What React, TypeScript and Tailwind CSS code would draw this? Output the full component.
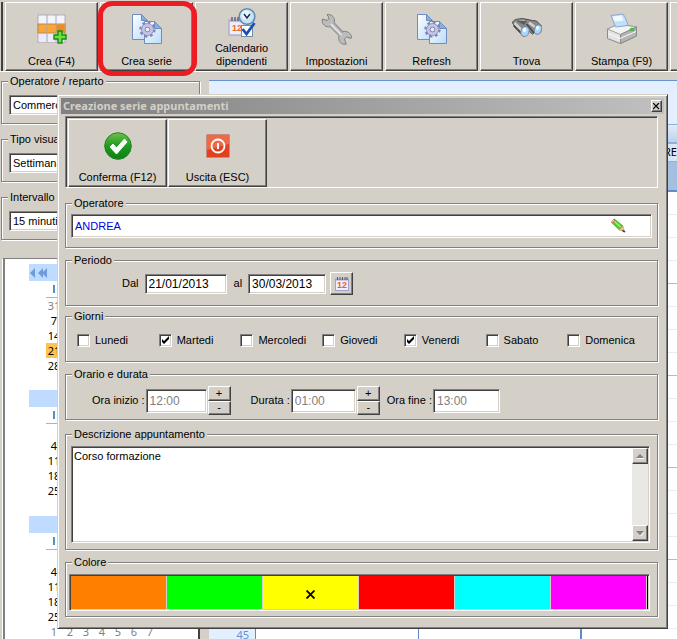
import { useState } from 'react'
import type { ReactNode } from 'react'
import clsx from 'clsx'

const raised =
  'border border-t-white border-l-white border-r-[#404040] border-b-[#404040] shadow-[inset_-1px_-1px_0_#808080] bg-[#d4d0c8]'
const sunken =
  'border border-t-[#808080] border-l-[#808080] border-r-white border-b-white shadow-[inset_1px_1px_0_#404040,inset_-1px_-1px_0_#d4d0c8] bg-white'

function GridAddIcon() {
  return (
    <svg width="32" height="32" viewBox="0 0 32 32">
      <rect x="2" y="2" width="27" height="27" fill="#fff" stroke="#a9a6b8" />
      <rect x="3" y="3" width="25" height="8" fill="#f3f3fc" />
      <rect x="3" y="20" width="25" height="9" fill="#ececf8" />
      <rect x="2" y="11" width="27" height="9" fill="#f9a73a" stroke="#c08a48" />
      <rect x="20" y="12" width="8" height="7" fill="#ee8d1b" />
      <path d="M11 2v27M20 2v27" stroke="#a9a6b8" />
      <path d="M22 18h4v4h4v4h-4v4h-4v-4h-4v-4h4z" fill="#6fe03c" stroke="#168c1a" strokeWidth="1.4" />
    </svg>
  )
}

function DocsGearIcon() {
  return (
    <svg width="32" height="32" viewBox="0 0 32 32">
      <defs>
        <linearGradient id="doc" x1="0" y1="0" x2="1" y2="1">
          <stop offset="0" stopColor="#fff" />
          <stop offset="1" stopColor="#b9dcfb" />
        </linearGradient>
      </defs>
      <path d="M1.500 1.500h9l6 6v19h-15z" fill="url(#doc)" stroke="#6f8bc0" />
      <path d="M10.500 1.500v6h6z" fill="#7db5ea" stroke="#6f8bc0" />
      <path d="M13.500 8.500h10l7 7v15h-17z" fill="url(#doc)" stroke="#6f8bc0" />
      <path d="M23.500 8.500v7h7z" fill="#7db5ea" stroke="#6f8bc0" />
      <circle cx="16.500" cy="16.500" r="7" fill="none" stroke="#8183b4" strokeWidth="2.400" strokeDasharray="2.750 2.750" />
      <circle cx="16.500" cy="16.500" r="6" fill="#c5c6e2" stroke="#8e90c0" />
      <circle cx="16.500" cy="16.500" r="2.400" fill="#e4eefb" stroke="#7f81b4" />
    </svg>
  )
}

function CalendarCheckIcon() {
  return (
    <svg width="32" height="32" viewBox="0 0 32 32">
      <rect x="3" y="13" width="19" height="15" fill="#eeedfb" stroke="#9a98c8" />
      <path d="M3 12h18v3H3z" fill="#b8b6dc" />
      <path d="M6 10v4M9 10v4M12 10v4M15 10v4" stroke="#55536e" strokeWidth="1.300" />
      <text x="6" y="24" fontSize="9" fontWeight="700" fill="#f06a1c" fontFamily="Liberation Sans, sans-serif">12</text>
      <circle cx="21" cy="9.500" r="7.800" fill="#c4e4fa" stroke="#6788ad" strokeWidth="1.600" />
      <circle cx="20" cy="8" r="4.500" fill="#e8f6ff" />
      <path d="M18 7l3 4 3-4" fill="none" stroke="#1b2a44" strokeWidth="1.400" />
      <rect x="15.500" y="18.500" width="11" height="11" fill="#fff" stroke="#7a8aa0" />
      <path d="M16.500 22l4 5 8-11" fill="none" stroke="#1450b8" strokeWidth="2.800" />
    </svg>
  )
}

function WrenchIcon() {
  return (
    <svg width="32" height="32" viewBox="0 0 32 32">
      <path
        d="M6 1.500c4-.5 7 2 7.500 5.500l-.3 2.700 8.500 8.800c4-.8 8.300 1.500 8.800 5.500l-.5 1.500-4.500-1.500-2 1.800.8 3.200 1.200 2c-4 1-7.300-1-7.800-5.500l.2-3-8.700-8.800C5 14.500 1.500 12 1.200 8l.3-2 4.500 1.500 2-1.700-.8-2.500z"
        fill="#bcbcbc"
        stroke="#808080"
      />
      <path d="M10 11l10.500 11" stroke="#e6e6e6" strokeWidth="1.500" />
      <path d="M12.500 10L22 20" stroke="#999" />
    </svg>
  )
}

function BinocularsIcon() {
  return (
    <svg width="32" height="32" viewBox="0 0 32 32">
      <path d="M1.500 10c0-2 3-4 6-4l4-.500 10 2 4 .500 5 5-9 8-6-5-3 5-8-7z" fill="#8a8a8a" stroke="#4a4a4a" />
      <path d="M9 6.500l7 1.500-3 4-7-4z" fill="#5c5c5c" />
      <path d="M3.500 10l9 9M18 9.500l8 6" stroke="#d2d2d2" strokeWidth="2.600" />
      <path d="M2.500 12.500l8 8.500M15.500 11l7.500 9" stroke="#444" strokeWidth="1.400" />
      <path d="M8 7l6 .5" stroke="#b9b9b9" />
      <ellipse cx="14" cy="18.500" rx="4" ry="5" fill="#a9d5fb" stroke="#77879a" transform="rotate(20 14 18.500)" />
      <ellipse cx="27" cy="16.500" rx="3.600" ry="4.800" fill="#a9d5fb" stroke="#77879a" transform="rotate(20 27 16.500)" />
      <ellipse cx="13.500" cy="17" rx="1.800" ry="2.200" fill="#eff9ff" />
      <ellipse cx="26.500" cy="15" rx="1.600" ry="2" fill="#eff9ff" />
    </svg>
  )
}

function PrinterIcon() {
  return (
    <svg width="32" height="32" viewBox="0 0 32 32">
      <path d="M1.500 16l11-5 18 3v9l-16 7.500-13-5z" fill="#e4e4e4" stroke="#8a8a8a" />
      <path d="M1.500 16l11-5 18 3-16 7.500z" fill="#f3f3f3" stroke="#a0a0a0" />
      <path d="M14.500 21.500v9l16-7.500v-9z" fill="#b5b5b5" stroke="#8a8a8a" />
      <path d="M2 20.500l12 5 16-7" fill="none" stroke="#fafafa" />
      <path d="M9.500 14L5 2.500 17 1c3 4 3.500 7 5 11.500z" fill="#c0e0fb" stroke="#8aa8cc" />
      <path d="M6.500 3.500l9-1 2 5-9 1z" fill="#f3faff" />
      <ellipse cx="26" cy="16.500" rx="2" ry="1.500" fill="#3ccf3c" stroke="#3a963a" strokeWidth=".5" />
    </svg>
  )
}

function ConfirmIcon() {
  return (
    <svg width="28" height="28" viewBox="0 0 28 28">
      <defs>
        <linearGradient id="ok" x1="0" y1="0" x2="0" y2="1">
          <stop offset="0" stopColor="#6cc04a" />
          <stop offset=".5" stopColor="#1f9a1f" />
          <stop offset="1" stopColor="#0d8011" />
        </linearGradient>
      </defs>
      <circle cx="14" cy="14" r="13.300" fill="url(#ok)" stroke="#22862a" />
      <path d="M6 15l3-3 3.500 4 8-9 2.500 3-10.500 12z" fill="#fff" stroke="#fff" strokeLinejoin="round" />
    </svg>
  )
}

function PowerIcon() {
  return (
    <svg width="24" height="24" viewBox="0 0 24 24">
      <rect x=".5" y=".5" width="23" height="23" rx="1" fill="#e2401f" stroke="#c98b7c" />
      <path d="M1 1h22v9L1 16z" fill="#ec6a4a" />
      <circle cx="12" cy="12" r="6.500" fill="none" stroke="#fff" strokeWidth="1.800" />
      <path d="M12 9v6" stroke="#fff" strokeWidth="2" />
    </svg>
  )
}

function PencilIcon() {
  return (
    <svg width="16" height="16" viewBox="0 0 16 16">
      <path d="M4.500 1L1.500 4.500l8 7.500 3.500-4z" fill="#4fce25" stroke="#3a9a1c" strokeWidth=".6" />
      <path d="M4.500 3.500l6 5.500" stroke="#a4f07a" strokeWidth="1.400" />
      <path d="M4 1L1.500 4l1 1L5 2z" fill="#fff" stroke="#e05050" strokeWidth=".8" />
      <path d="M9 12l4-4 1.500 5.500z" fill="#f5bd86" stroke="#c08a58" strokeWidth=".5" />
      <path d="M12.500 12.500l2 .5.500 1-2-.5z" fill="#333" stroke="#444" />
    </svg>
  )
}

function SmallCalendarIcon() {
  return (
    <svg width="16" height="16" viewBox="0 0 16 16">
      <rect x="1.500" y="3.500" width="13" height="11" fill="#f0effc" stroke="#a2a0cc" />
      <path d="M1 2.500h14v2H1z" fill="#a5a3c4" />
      <path d="M3.500 1v3M6 1v3M8.500 1v3M11 1v3M13 1v3" stroke="#5a5870" />
      <text x="3" y="12" fontSize="9" fontWeight="700" fill="#f0601a" fontFamily="Liberation Sans, sans-serif">12</text>
    </svg>
  )
}

interface ToolButtonProps {
  icon: ReactNode
  label: string
  active?: boolean
  className?: string
}

function ToolButton({ icon, label, active, className }: ToolButtonProps) {
  return (
    <button
      type="button"
      className={clsx('relative flex shrink-0 flex-col items-center px-2 pb-[2px] leading-[13px]', raised, className, active && 'border-t-black')}
    >
      <span className="flex flex-1 items-center">{icon}</span>
      <span className="text-center">{label}</span>
      {active && <span className="absolute -top-[2px] -right-[5px] -bottom-[6px] -left-[3px] z-10 rounded-[14px] border-[5px] border-[#ed1c24]" />}
    </button>
  )
}

function Group({ title, className, children }: { title: string; className?: string; children: ReactNode }) {
  return (
    <fieldset className={clsx('min-w-0 border border-[#808080] shadow-[inset_1px_1px_0_#fff,1px_1px_0_#fff]', className)}>
      <legend className="ml-[6px] bg-[#d4d0c8] px-[2px] leading-3 whitespace-nowrap">{title}</legend>
      {children}
    </fieldset>
  )
}

function SideSelect({ title, value }: { title: string; value: string }) {
  return (
    <Group title={title} className="pt-2 pb-2">
      <div className="px-[7px]">
        <select aria-label={title} className={clsx('block h-5 w-full appearance-none px-[3px]', sunken)}>
          <option>{value}</option>
        </select>
      </div>
    </Group>
  )
}

const months = [
  [['31'], ['7'], ['14'], ['21'], ['28'], ['']],
  [[''], ['4'], ['11'], ['18'], ['25'], ['']],
  [[''], ['4'], ['11'], ['18'], ['25'], ['1', '2', '3', '4', '5', '6', '7']],
]

function Month({ weeks, first }: { weeks: string[][]; first: boolean }) {
  return (
    <div className="w-[150px] text-[11px]">
      <div className="flex h-[17px] items-center bg-[#bfdbff] px-px">
        {first && (
          <button type="button" aria-label="Mese precedente">
            <svg width="18" height="10" viewBox="0 0 18 10" fill="#6d9bdb">
              <path d="M5 0v10L0 5zM13 0v10L8 5zM17 0v10l-5-5z" />
            </svg>
          </button>
        )}
      </div>
      <table className="ml-[17px] table-fixed border-collapse font-['Noto_Sans',Tahoma,sans-serif] leading-[15px]">
        <thead>
          <tr className="h-4 border-b border-[#8db8f0]">
            {['l', '', '', '', '', '', ''].map((day, i) => (
              <th key={i} className="w-4 min-w-4 p-0 font-normal">{day}</th>
            ))}
          </tr>
        </thead>
        <tbody>
          {weeks.map((week, i) => (
            <tr key={i} className="h-[15px]">
              {week.map((day, j) => (
                <td
                  key={j}
                  className={clsx(
                    'p-0 text-center',
                    (day === '31' || week.length === 7) && 'text-[#808080]',
                    day === '21' && first && 'bg-[#fbc34f]',
                  )}
                >
                  {day}
                </td>
              ))}
            </tr>
          ))}
        </tbody>
      </table>
    </div>
  )
}

const slots = Array.from({ length: 20 }, (_, i) => (i === 19 ? '45' : ''))

function Schedule() {
  return (
    <div className="mt-2 ml-[9px] min-w-0 flex-1 overflow-hidden bg-white font-['Noto_Sans',Tahoma,sans-serif] text-[11px]">
      <div className="h-11 border-t border-[#6593cf] bg-[#e3efff]" />
      <div className="h-5 border-t border-b-2 border-[#8db0de] bg-gradient-to-b from-[#e3ecf9] to-[#bdd1ec]" />
      <div className="flex h-[18px] items-center justify-end border-b border-[#8db0de] bg-[#dbe6f5]">RE</div>
      <div className="h-[30px] border-b-2 border-[#5d8cc9] bg-[#a5bfe1]" />
      {slots.map((slot, i) => (
        <div key={i} className="flex h-[23px]">
          <div className="w-[47px] border-r border-[#5d8cc9] bg-[#e3efff] pr-[6px] text-right leading-3 text-[#6593cf]">{slot}</div>
          <div className={clsx('flex flex-1 border-b', i % 4 === 3 ? 'border-b-[#a5bfe1]' : 'border-b-[#e6edf7]')}>
            <div className="w-[163px] border-r border-r-[#5d8cc9]" />
            <div className="w-[163px] border-r-2 border-r-[#5d8cc9]" />
          </div>
        </div>
      ))}
    </div>
  )
}

function CheckDay({ name, initial }: { name: string; initial: boolean }) {
  const [on, setOn] = useState(initial)
  return (
    <label className="flex items-center gap-[5px]">
      <span className="relative flex size-[13px]">
        <input type="checkbox" checked={on} onChange={() => setOn(!on)} className={clsx('size-[13px] appearance-none', sunken)} />
        {on && (
          <svg className="pointer-events-none absolute inset-0" width="13" height="13" viewBox="0 0 13 13">
            <path d="M3 5v3l2 2 5-5V2L5 7z" fill="#000" />
          </svg>
        )}
      </span>
      {name}
    </label>
  )
}

function TimeField({ label, value, className, spin }: { label: string; value: string; className: string; spin?: boolean }) {
  return (
    <div className="flex items-center">
      <label className="flex items-center gap-px">
        {label}
        <input disabled defaultValue={value} className={clsx('h-6 px-[3px] text-xs text-[#808080]', sunken, className)} />
      </label>
      {spin && (
        <div className="ml-px flex h-[29px] w-[23px] flex-col">
          <button type="button" className={clsx('flex flex-1 items-center justify-center leading-none', raised)}>+</button>
          <button type="button" className={clsx('flex flex-1 items-center justify-center leading-none', raised)}>-</button>
        </div>
      )}
    </div>
  )
}

const colors = [
  { name: 'Arancione', bg: 'bg-[#ff8000]' },
  { name: 'Verde', bg: 'bg-[#00ff00]' },
  { name: 'Giallo', bg: 'bg-[#ffff00]' },
  { name: 'Rosso', bg: 'bg-[#ff0000]' },
  { name: 'Ciano', bg: 'bg-[#00ffff]' },
  { name: 'Magenta', bg: 'bg-[#ff00ff]' },
]

function SeriesDialog() {
  const [color, setColor] = useState('Giallo')
  return (
    <div
      role="dialog"
      aria-label="Creazione serie appuntamenti"
      className="absolute top-[94px] right-[9px] left-[57px] border border-t-[#d4d0c8] border-r-[#404040] border-b-[#404040] border-l-[#d4d0c8] bg-[#d4d0c8] p-[3px] shadow-[inset_1px_1px_0_#fff,inset_-1px_-1px_0_#808080]"
    >
      <div className="flex h-4 items-center justify-between bg-gradient-to-r from-[#808080] to-[#c0c0c0] px-[2px]">
        <h1 className="font-['Noto_Sans',Tahoma,sans-serif] font-bold text-[#d4d0c8]">Creazione serie appuntamenti</h1>
        <button type="button" aria-label="Chiudi" className={clsx('flex h-3 w-[11px] items-center justify-center', raised)}>
          <svg width="7" height="7" viewBox="0 0 7 7">
            <path d="M0 0l6 6M6 0L0 6" stroke="#000" strokeWidth="1.200" />
          </svg>
        </button>
      </div>

      <div className="mt-[2px] pr-[6px] pb-2 pl-1">
        <div className="flex border border-t-[#808080] border-r-white border-b-white border-l-[#808080] pt-[2px] pl-[2px] shadow-[inset_1px_1px_0_#404040]">
          <ToolButton icon={<ConfirmIcon />} label="Conferma (F12)" className="h-[68px] w-[99px]" />
          <ToolButton icon={<PowerIcon />} label="Uscita (ESC)" className="ml-px h-[68px] w-[99px]" />
        </div>

        <Group title="Operatore" className="mt-[9px] pt-[5px] pb-[9px]">
          <div className={clsx('mx-[5px] flex h-6 items-center pr-[25px] pl-[3px]', sunken)}>
            <input aria-label="Operatore" defaultValue="ANDREA" className="min-w-0 flex-1 text-[#0000e0] outline-none" />
            <button type="button" aria-label="Modifica operatore"><PencilIcon /></button>
          </div>
        </Group>

        <Group title="Periodo" className="mt-[6px] pt-[6px] pb-[10px]">
          <div className="ml-14 flex items-center">
            <label className="flex items-center gap-[6px]">
              Dal
              <input defaultValue="21/01/2013" className={clsx('h-5 w-[82px] px-[3px] text-xs', sunken)} />
            </label>
            <label className="ml-[7px] flex items-center gap-[6px]">
              al
              <input defaultValue="30/03/2013" className={clsx('h-5 w-[78px] px-[3px] text-xs', sunken)} />
            </label>
            <button type="button" aria-label="Calendario" className={clsx('ml-1 flex size-[23px] items-center justify-center', raised)}>
              <SmallCalendarIcon />
            </button>
          </div>
        </Group>

        <Group title="Giorni" className="mt-1 pt-3 pb-[14px]">
          <div className="mr-2 ml-[11px] grid grid-cols-7 leading-[13px]">
            {['Lunedi', 'Martedi', 'Mercoledi', 'Giovedi', 'Venerdi', 'Sabato', 'Domenica'].map((name, i) => (
              <CheckDay key={name} name={name} initial={i === 1 || i === 4} />
            ))}
          </div>
        </Group>

        <Group title="Orario e durata" className="mt-[6px] pt-[6px] pb-1">
          <div className="ml-[26px] flex items-center">
            <TimeField label="Ora inizio :" value="12:00" className="w-[61px]" spin />
            <div className="w-5" />
            <TimeField label="Durata :" value="01:00" className="w-[65px]" spin />
            <div className="w-[7px]" />
            <TimeField label="Ora fine :" value="13:00" className="w-[67px]" />
          </div>
        </Group>

        <Group title="Descrizione appuntamento" className="mt-2 pt-[6px] pb-[6px]">
          <div className={clsx('mr-[7px] ml-[5px] flex h-[97px] p-px', sunken)}>
            <textarea
              aria-label="Descrizione appuntamento"
              defaultValue="Corso formazione"
              className="min-w-0 flex-1 resize-none overflow-hidden px-px py-[2px] leading-[13px] outline-none"
            />
            <div className="flex w-4 flex-col justify-between bg-[#eae8e4]">
              <button type="button" aria-label="Su" className={clsx('flex size-4 items-center justify-center', raised)}>
                <svg width="8" height="5" viewBox="0 0 8 5"><path d="M4 0l4 4H0z" fill="#808080" /><path d="M1 4.500h7" stroke="#fff" /></svg>
              </button>
              <button type="button" aria-label="Giu" className={clsx('flex size-4 items-center justify-center', raised)}>
                <svg width="8" height="5" viewBox="0 0 8 5"><path d="M5 5l3-4" stroke="#fff" /><path d="M0 0h8L4 4z" fill="#808080" /></svg>
              </button>
            </div>
          </div>
        </Group>

        <Group title="Colore" className="mt-[6px] pt-[6px] pb-[5px]">
          <div className={clsx('mr-[7px] ml-[3px] flex h-[37px] p-px', sunken)}>
            {colors.map(({ name, bg }) => (
              <button
                key={name}
                type="button"
                aria-label={name}
                aria-pressed={color === name}
                onClick={() => setColor(name)}
                className={clsx('flex flex-1 items-center justify-center border-r border-[#d4d0c8] pt-1', bg)}
              >
                {color === name && (
                  <svg width="9" height="9" viewBox="0 0 9 9"><path d="M.5.5l8 8M8.500.5l-8 8" stroke="#000" strokeWidth="1.800" /></svg>
                )}
              </button>
            ))}
            <div className="w-px bg-black" />
          </div>
        </Group>
      </div>
    </div>
  )
}

export default function App() {
  return (
    <div className="relative flex h-screen flex-col overflow-hidden bg-[#d4d0c8] font-['Liberation_Sans',Arial,sans-serif] text-[11px] text-black">
      <div className="flex shrink-0 gap-[2px] border-b border-white pt-[2px]">
        <div className="w-[3px] shrink-0 border-r-2 border-[#404040]" />
        <ToolButton icon={<GridAddIcon />} label="Crea (F4)" className="h-[69px] w-[93px]" />
        <ToolButton icon={<DocsGearIcon />} label="Crea serie" className="h-[69px] w-[93px]" active />
        <ToolButton icon={<CalendarCheckIcon />} label="Calendario dipendenti" className="h-[69px] w-[93px]" />
        <ToolButton icon={<WrenchIcon />} label="Impostazioni" className="h-[69px] w-[93px]" />
        <ToolButton icon={<DocsGearIcon />} label="Refresh" className="h-[69px] w-[93px]" />
        <ToolButton icon={<BinocularsIcon />} label="Trova" className="h-[69px] w-[93px]" />
        <ToolButton icon={<PrinterIcon />} label="Stampa (F9)" className="h-[69px] w-[93px]" />
        <ToolButton icon={null} label="" className="h-[69px] w-[93px]" />
      </div>

      <div className="flex min-h-0 flex-1">
        <div className="flex w-[200px] shrink-0 flex-col pt-[3px] pl-px">
          <div className="flex flex-col gap-[9px]">
            <SideSelect title="Operatore / reparto" value="Commerciale" />
            <SideSelect title="Tipo visualizzazione" value="Settimana" />
            <SideSelect title="Intervallo" value="15 minuti" />
          </div>
          <div className="mt-[18px] ml-px min-h-0 flex-1 overflow-hidden border-t border-r-2 border-l border-t-[#808080] border-r-[#404040] border-l-white">
            <div className="min-h-full border-l-2 border-[#808080] bg-white pt-[5px] pl-6">
              {months.map((weeks, i) => (
                <div key={i} className="h-[126px]">
                  <Month weeks={weeks} first={i === 0} />
                </div>
              ))}
            </div>
          </div>
        </div>
        <Schedule />
      </div>

      <SeriesDialog />
    </div>
  )
}
